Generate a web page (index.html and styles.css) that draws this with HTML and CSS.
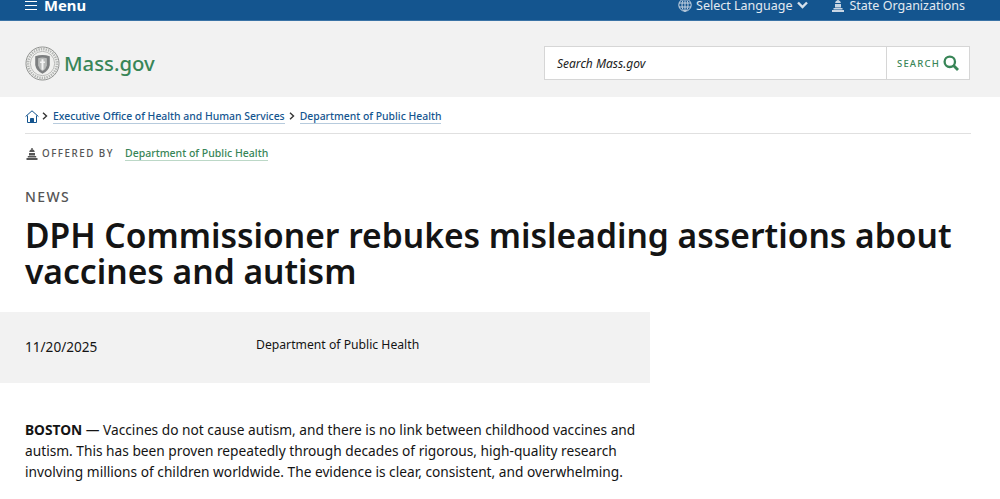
FILE: index.html
```html
<!DOCTYPE html>
<html lang="en">
<head>
  <meta charset="UTF-8" />
  <meta name="viewport" content="width=device-width, initial-scale=1.0" />
  <title>DPH Commissioner rebukes misleading assertions about vaccines and autism | Mass.gov</title>
  <link rel="stylesheet" href="styles.css">
</head>
<body>
  <div class="top-bar">
    <a class="menu-btn" href="#">
      <svg class="menu-icon" viewBox="0 0 12 9" width="12" height="9"><path d="M0 .5h12M0 4.5h12M0 8.500h12" stroke="#fff" stroke-width="1"/></svg>
      Menu
    </a>
    <div class="top-links">
      <a href="#">
        <svg viewBox="0 0 14 14" width="14" height="14" fill="none" stroke="#c9d6e4" stroke-width="1"><circle cx="7" cy="7" r="6.200"/><ellipse cx="7" cy="7" rx="3" ry="6.200"/><path d="M7 .8v12.400M1 5h12M1 9h12"/></svg>
        Select Language
        <svg class="chev" viewBox="0 0 11 8" width="11" height="8" fill="none" stroke="#d5e0eb" stroke-width="2.400"><path d="M1 1.500l4.500 4.500 4.500-4.500"/></svg>
      </a>
      <a href="#">
        <svg viewBox="0 0 14 13" width="14" height="13" fill="#c9d6e4"><path d="M6.300 0h1.400v1.500c1.200.3 2 1.200 2.100 2.500H4.200c.1-1.300.9-2.200 2.100-2.500zM4 5h6v3.500H4zM2.500 9h9v1.500h-9zM1 11h12v2H1z"/></svg>
        State Organizations
      </a>
    </div>
  </div>

  <header class="site-header">
    <a class="logo" href="#">
      <svg class="seal" viewBox="0 0 36 36" width="35" height="35">
        <circle cx="18" cy="18" r="17" fill="#f4f4f2" stroke="#8b8d8b" stroke-width="1"/>
        <circle cx="18" cy="18" r="14.800" fill="none" stroke="#b5b7b5" stroke-width="2.600" stroke-dasharray="1.500 1"/>
        <circle cx="18" cy="18" r="12.500" fill="#f0f0ee" stroke="#a0a2a0" stroke-width=".7"/>
        <path d="M10.500 10.500q7.500-2.500 15 0v9q-1 6-7.500 9-6.500-3-7.500-9z" fill="#7d7f80"/>
        <path d="M13.500 12.500q4.500-1.500 9 0v7.500q-1 4-4.500 6-3.500-2-4.500-6z" fill="#b9bbba"/>
        <path d="M17 13.500h2v11h-2zM15.500 16h5v1.500h-5z" fill="#f4f4f4"/>
      </svg>
      <span>Mass.gov</span>
    </a>
    <form class="search">
      <div class="search-input">Search Mass.gov</div>
      <div class="search-btn">
        SEARCH
        <svg viewBox="0 0 16 16" width="16" height="16" fill="none" stroke="#388557" stroke-width="2.300"><circle cx="6.800" cy="6.800" r="5.200"/><path d="M10.500 10.500l4.500 4.500" stroke-width="2.800"/></svg>
      </div>
    </form>
  </header>

  <nav class="crumbs">
    <svg class="home" viewBox="0 0 14 13" width="14" height="13" fill="none" stroke="#14558f" stroke-width="1"><path d="M.6 6.500L7 .8l6.400 5.700"/><path d="M2.500 5.500v7h9v-7"/><path d="M5.500 12.500v-4h3v4" fill="#14558f"/></svg>
    <svg class="sep" viewBox="0 0 6 8" width="6" height="8" fill="none" stroke="#333" stroke-width="1.400"><path d="M1 .8L4.500 4 1 7.200"/></svg>
    <a href="#">Executive Office of Health and Human Services</a>
    <svg class="sep sep-last" viewBox="0 0 6 8" width="6" height="8" fill="none" stroke="#333" stroke-width="1.400"><path d="M1 .8L4.500 4 1 7.200"/></svg>
    <a href="#">Department of Public Health</a>
  </nav>

  <div class="offered">
    <svg viewBox="0 0 12 12" width="12" height="12" fill="#555"><path d="M5.300 0h1.400v1.500c1.100.3 1.900 1.200 2 2.500H3.300c.1-1.300.9-2.200 2-2.500zM3 5h6v2.500H3zM1.800 8h8.400v1.500H1.800zM.5 10h11v2H.5z"/></svg>
    <span class="offered-label">OFFERED BY</span>
    <a href="#">Department of Public Health</a>
  </div>

  <main>
    <div class="kicker">NEWS</div>
    <h1>DPH Commissioner rebukes misleading assertions about vaccines and autism</h1>

    <div class="meta-band">
      <span class="date">11/20/2025</span>
      <span class="org">Department of Public Health</span>
    </div>

    <p class="lead"><strong>BOSTON</strong> — Vaccines do not cause autism, and there is no link between childhood vaccines and autism. This has been proven repeatedly through decades of rigorous, high-quality research involving millions of children worldwide. The evidence is clear, consistent, and overwhelming.</p>
  </main>
</body>
</html>
```

FILE: styles.css
```css
:root {
  --blue: #14558f;
  --green: #388557;
  --grey: #f2f2f2;
  --text: #141414;
}

* {
  margin: 0;
  padding: 0;
  box-sizing: border-box;
}

html, body {
  height: 499px;
  overflow: hidden;
}

body {
  font-family: "Noto Sans", sans-serif;
  background: #fff;
  color: var(--text);
}

a {
  text-decoration: none;
}

.top-bar {
  height: 21px;
  background: var(--blue);
  border-bottom: 1px solid #3a73a6;
  padding: 0 35px 0 25px;
  display: flex;
  justify-content: space-between;
  overflow: hidden;
}

.menu-btn {
  display: flex;
  align-items: center;
  gap: 7px;
  height: 10px;
  color: #fff;
  font-size: 14.800px;
  font-weight: 700;
}

.top-links {
  display: flex;
  gap: 23px;
  height: 10px;
}

.top-links a {
  display: flex;
  align-items: center;
  gap: 4px;
  color: #e3eaf1;
  font-size: 12.500px;
}

.top-links .chev {
  margin-left: 1px;
}

.site-header {
  height: 76px;
  background: var(--grey);
  padding: 8px 30px 0 25px;
  display: flex;
  justify-content: space-between;
  align-items: center;
}

.logo {
  display: flex;
  align-items: center;
  gap: 4px;
  color: var(--green);
  font-size: 20.300px;
  font-weight: 500;
}

.search {
  display: flex;
  width: 426px;
  height: 34px;
  background: #fff;
  border: 1px solid #d6d6d6;
}

.search-input {
  flex: 1;
  padding-left: 12px;
  font-size: 12px;
  font-style: italic;
  line-height: 33px;
  color: #222;
}

.search-btn {
  width: 83px;
  border-left: 1px solid #d6d6d6;
  display: flex;
  align-items: center;
  justify-content: center;
  gap: 3px;
  color: var(--green);
  font-size: 9.500px;
  font-weight: 500;
  letter-spacing: 1.200px;
}

.crumbs {
  height: 37px;
  margin: 0 29px 0 25px;
  padding-top: 2px;
  border-bottom: 1px solid #e0e0e0;
  display: flex;
  align-items: center;
  font-size: 10.400px;
  font-weight: 500;
}

.crumbs a {
  color: var(--blue);
  border-bottom: 1px solid #b7cbdd;
  line-height: 14px;
}

.crumbs .sep {
  margin: 0 5px 0 3px;
}

.crumbs .sep-last {
  margin-left: 4px;
}

.offered {
  height: 39px;
  margin-left: 26px;
  display: flex;
  align-items: center;
  font-size: 10.500px;
}

.offered-label {
  margin: 0 11px 0 4px;
  font-size: 9.800px;
  font-weight: 500;
  letter-spacing: 1.500px;
  color: #555;
}

.offered a {
  color: var(--green);
  font-weight: 500;
  border-bottom: 1px solid #bcd8c7;
  line-height: 14px;
}

.kicker {
  margin: 14px 0 0 25px;
  font-size: 14px;
  font-weight: 500;
  letter-spacing: 1.400px;
  line-height: 19px;
  color: #555;
}

h1 {
  margin: 11px 25px 0;
  font-size: 33.600px;
  font-weight: 600;
  line-height: 36px;
}

.meta-band {
  margin-top: 23px;
  width: 650px;
  height: 71px;
  background: var(--grey);
  padding: 0 25px;
  display: flex;
  font-size: 12.200px;
}

.date {
  width: 231px;
  padding-top: 25px;
  font-size: 13.600px;
}

.org {
  padding-top: 24px;
}

.lead {
  margin: 36px 0 0 25px;
  width: 625px;
  font-size: 13.730px;
  line-height: 21px;
}

.lead strong {
  font-weight: 700;
}
```
